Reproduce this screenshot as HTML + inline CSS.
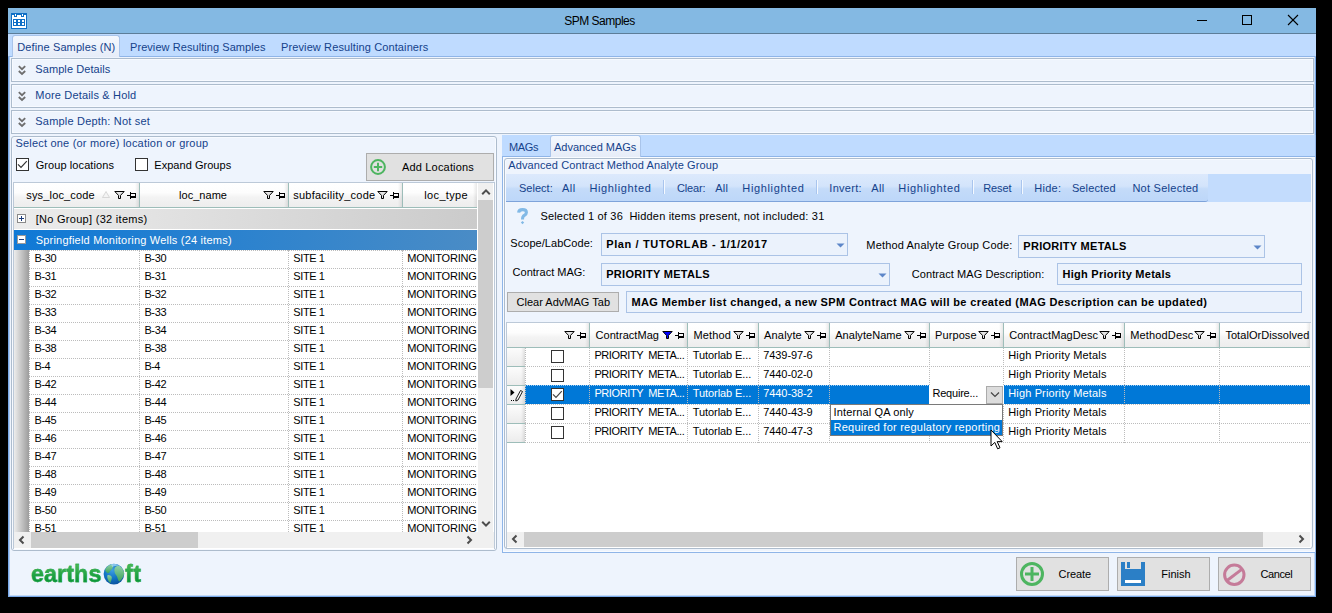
<!DOCTYPE html><html><head><meta charset='utf-8'><title>SPM Samples</title><style>
html,body{margin:0;padding:0;background:#000;}
body{width:1332px;height:613px;overflow:hidden;position:relative;font-family:"Liberation Sans",sans-serif;font-size:11px;color:#000;}
.a{position:absolute;box-sizing:border-box;}
.t{position:absolute;white-space:pre;line-height:14px;height:14px;font-size:11px;}
.n{color:#15428b;}
.b{font-weight:bold;}
.w{color:#fff;}
.ti{font-size:12px;}
.lg{font-size:23.3px;font-weight:bold;line-height:30px;height:30px;background:linear-gradient(#43b753 22%,#079436 78%);-webkit-background-clip:text;background-clip:text;color:transparent;-webkit-text-stroke:0.35px #25a64a;}
.hdr{background:linear-gradient(90deg,rgba(0,0,0,0) 0,rgba(0,0,0,0) calc(100% - 4px),rgba(0,0,0,0.09) 100%),linear-gradient(#ffffff 0%,#fdfdfd 40%,#f3f3f3 60%,#ededed 100%);border-right:1px solid #9dbdb9;border-bottom:1px solid #9dbdb9;}
.btn{background:#e1e1e1;border:1px solid #adadad;}
.inp{background:#ebf2fc;border:1px solid #abc3e6;}
.dotb{border-bottom:1px dotted #bcbcbc;}
.dotr{border-right:1px dotted #bcbcbc;}
.cb{background:#fff;border:1px solid #333;width:13px;height:13px;}
</style></head><body>
<div class='a' style='left:8px;top:8px;width:1308px;height:589px;background:#eef4fd;'></div>
<div class='a' style='left:8px;top:34px;width:1308px;height:563px;border:1px solid #7aa9e8;border-top:none;box-shadow:inset 1px 0 0 #aecbf3,inset -1px 0 0 #c4daf6,inset 0 -1px 0 #c4daf6;'></div>
<div class='a' style='left:8px;top:8px;width:1308px;height:25px;background:#84b9e3;'></div>
<div class='a' style='left:8px;top:33px;width:1308px;height:1px;background:#5c7d99;'></div>
<span class='t ti' style='left:564.2px;top:13.5px;letter-spacing:-0.494px;'>SPM Samples</span>
<svg class='a' style='left:11px;top:13px' width='16' height='16' viewBox='0 0 16 16' shape-rendering='crispEdges'>
<rect x='0' y='0' width='16' height='16' fill='#0f6fc6'/>
<rect x='1' y='2' width='14' height='13' fill='#fff'/>
<rect x='3' y='0' width='3' height='4' fill='#0f6fc6'/><rect x='10' y='0' width='3' height='4' fill='#0f6fc6'/>
<rect x='4' y='1' width='1' height='2' fill='#fff'/><rect x='11' y='1' width='1' height='2' fill='#fff'/>
<rect x='2' y='6' width='12' height='7' fill='#0f6fc6'/>
<g fill='#fff'><rect x='3' y='7' width='2' height='2'/><rect x='7' y='7' width='2' height='2'/><rect x='11' y='7' width='2' height='2'/>
<rect x='3' y='10' width='2' height='2'/><rect x='7' y='10' width='2' height='2'/><rect x='11' y='10' width='2' height='2'/></g>
</svg>
<svg class='a' style='left:1190px;top:8px' width='126' height='25' viewBox='0 0 126 25'>
<g stroke='#000' stroke-width='1' fill='none' shape-rendering='crispEdges'>
<line x1='7' y1='12.5' x2='17' y2='12.5'/>
<rect x='52.5' y='7.5' width='9' height='9'/>
</g>
<g stroke='#000' stroke-width='1.1' fill='none'><line x1='98' y1='7' x2='108' y2='17'/><line x1='108' y1='7' x2='98' y2='17'/></g>
</svg>
<div class='a' style='left:8px;top:34px;width:1308px;height:23px;background:#bfdbff;border-bottom:1px solid #8fb5e8;'></div>
<div class='a' style='left:12px;top:35px;width:108px;height:22px;background:linear-gradient(#f4f8fe,#e6ecf8);border:1px solid #a9c4ea;border-bottom:none;border-radius:3px 3px 0 0;'></div>
<span class='t n' style='left:17.3px;top:40.0px;letter-spacing:0.112px;'>Define Samples (N)</span>
<span class='t n' style='left:130.0px;top:40.0px;letter-spacing:0.064px;'>Preview Resulting Samples</span>
<span class='t n' style='left:281.0px;top:40.0px;letter-spacing:0.114px;'>Preview Resulting Containers</span>
<div class='a' style='left:11px;top:58px;width:1303px;height:24px;background:#eef4fd;border:1px solid #adbccd;box-shadow:inset 0 0 0 1px #f7faff;'></div>
<svg class='a' style='left:18px;top:65px' width='8' height='11' viewBox='0 0 8 11'><g fill='none' stroke='#6e6e6e' stroke-width='1.8'><path d='M0.8 1.2 L4 4.2 L7.2 1.2'/><path d='M0.8 6 L4 9 L7.2 6'/></g></svg>
<span class='t n' style='left:35.3px;top:62.3px;letter-spacing:0.080px;'>Sample Details</span>
<div class='a' style='left:11px;top:84px;width:1303px;height:24px;background:#eef4fd;border:1px solid #adbccd;box-shadow:inset 0 0 0 1px #f7faff;'></div>
<svg class='a' style='left:18px;top:91px' width='8' height='11' viewBox='0 0 8 11'><g fill='none' stroke='#6e6e6e' stroke-width='1.8'><path d='M0.8 1.2 L4 4.2 L7.2 1.2'/><path d='M0.8 6 L4 9 L7.2 6'/></g></svg>
<span class='t n' style='left:35.3px;top:88.3px;letter-spacing:0.172px;'>More Details &amp; Hold</span>
<div class='a' style='left:11px;top:110px;width:1303px;height:24px;background:#eef4fd;border:1px solid #adbccd;box-shadow:inset 0 0 0 1px #f7faff;'></div>
<svg class='a' style='left:18px;top:117px' width='8' height='11' viewBox='0 0 8 11'><g fill='none' stroke='#6e6e6e' stroke-width='1.8'><path d='M0.8 1.2 L4 4.2 L7.2 1.2'/><path d='M0.8 6 L4 9 L7.2 6'/></g></svg>
<span class='t n' style='left:35.3px;top:114.3px;letter-spacing:0.192px;'>Sample Depth: Not set</span>
<div class='a' style='left:11px;top:136px;width:486px;height:415px;background:#eef4fd;border:1px solid #adbccd;border-radius:3px;box-shadow:inset 0 0 0 1px #f7faff;'></div>
<span class='t n' style='left:15.4px;top:136.0px;letter-spacing:0.201px;'>Select one (or more) location or group</span>
<div class='a cb' style='left:16px;top:158px;'></div>
<svg class='a' style='left:16px;top:158px' width='13' height='13' viewBox='0 0 13 13'><path d='M2 6.3 L5 9.3 L10.8 3.2' fill='none' stroke='#333' stroke-width='1.2'/></svg>
<span class='t ' style='left:35.7px;top:158.0px;letter-spacing:0.084px;'>Group locations</span>
<div class='a cb' style='left:135px;top:158px;'></div>
<span class='t ' style='left:154.3px;top:158.0px;letter-spacing:0.036px;'>Expand Groups</span>
<div class='a btn' style='left:366px;top:153px;width:128px;height:28px;'></div>
<svg class='a' style='left:370px;top:159px' width='16' height='16' viewBox='0 0 16 16'><circle cx='8' cy='8' r='6.9' fill='none' stroke='#4db560' stroke-width='2'/><path d='M8 3.8 V12.2 M3.8 8 H12.2' stroke='#4db560' stroke-width='2'/></svg>
<span class='t ' style='left:402.0px;top:160.0px;letter-spacing:0.175px;'>Add Locations</span>
<div class='a' style='left:13px;top:182px;width:482px;height:367px;background:#fff;border:1px solid #bcc9d8;border-bottom:none;'></div>
<div class='a hdr' style='left:14px;top:183px;width:126px;height:25px;'></div>
<div class='a hdr' style='left:140px;top:183px;width:149px;height:25px;'></div>
<div class='a hdr' style='left:289px;top:183px;width:114px;height:25px;'></div>
<div class='a hdr' style='left:403px;top:183px;width:75px;height:25px;'></div>
<span class='t ' style='left:26.3px;top:187.5px;letter-spacing:0.154px;'>sys_loc_code</span>
<svg class='a' style='left:102px;top:191px' width='8' height='7' viewBox='0 0 8 7'><path d='M0.5 6.5 L4 0.5 L7.5 6.5 Z' fill='#f4f4f4' stroke='#cfcfcf' stroke-width='0.8'/></svg>
<svg class='a' style='left:114px;top:191px' width='11' height='8' viewBox='0 0 11 8'><path d='M0.8 0.5 H10.2 L6.5 4.4 V7.5 H4.5 V4.4 Z' fill='#e4e4e4' stroke='#000' stroke-width='1'/></svg>
<svg class='a' style='left:127px;top:192px' width='9' height='7' viewBox='0 0 9 7' shape-rendering='crispEdges'><path d='M0 3.5 H3.5 M3.5 0 V7 M4 1.5 H8.5 V5.5 H4' fill='none' stroke='#000' stroke-width='1'/><path d='M4 4.5 H8.5' stroke='#000' stroke-width='1'/></svg>
<span class='t ' style='left:179.0px;top:187.5px;letter-spacing:0.037px;'>loc_name</span>
<svg class='a' style='left:263px;top:191px' width='11' height='8' viewBox='0 0 11 8'><path d='M0.8 0.5 H10.2 L6.5 4.4 V7.5 H4.5 V4.4 Z' fill='#e4e4e4' stroke='#000' stroke-width='1'/></svg>
<svg class='a' style='left:276px;top:192px' width='9' height='7' viewBox='0 0 9 7' shape-rendering='crispEdges'><path d='M0 3.5 H3.5 M3.5 0 V7 M4 1.5 H8.5 V5.5 H4' fill='none' stroke='#000' stroke-width='1'/><path d='M4 4.5 H8.5' stroke='#000' stroke-width='1'/></svg>
<span class='t ' style='left:293.2px;top:187.5px;letter-spacing:0.251px;'>subfacility_code</span>
<svg class='a' style='left:377px;top:191px' width='11' height='8' viewBox='0 0 11 8'><path d='M0.8 0.5 H10.2 L6.5 4.4 V7.5 H4.5 V4.4 Z' fill='#e4e4e4' stroke='#000' stroke-width='1'/></svg>
<svg class='a' style='left:390px;top:192px' width='9' height='7' viewBox='0 0 9 7' shape-rendering='crispEdges'><path d='M0 3.5 H3.5 M3.5 0 V7 M4 1.5 H8.5 V5.5 H4' fill='none' stroke='#000' stroke-width='1'/><path d='M4 4.5 H8.5' stroke='#000' stroke-width='1'/></svg>
<span class='t ' style='left:424.3px;top:187.5px;letter-spacing:0.339px;'>loc_type</span>
<div class='a' style='left:14px;top:209px;width:463px;height:20px;background:linear-gradient(90deg,#ececec,#cbcbcb);'></div>
<svg class='a' style='left:17px;top:214px' width='9' height='9' viewBox='0 0 9 9' shape-rendering='crispEdges'><rect x='0.5' y='0.5' width='8' height='8' fill='#fff' stroke='#8a8a8a'/><path d='M2 4.5 H7 M4.5 2 V7' stroke='#1a3a7a' stroke-width='1'/></svg>
<span class='t ' style='left:35.7px;top:212.0px;letter-spacing:0.287px;'>[No Group] (32 items)</span>
<div class='a' style='left:14px;top:230px;width:463px;height:20px;background:linear-gradient(90deg,#0f79d6,#4a8cc6);'></div>
<svg class='a' style='left:17px;top:235px' width='9' height='9' viewBox='0 0 9 9' shape-rendering='crispEdges'><rect x='0.5' y='0.5' width='8' height='8' fill='#fff' stroke='#9a9a9a'/><path d='M2 4.5 H7' stroke='#1a3a7a' stroke-width='1'/></svg>
<span class='t w' style='left:35.7px;top:233.0px;letter-spacing:0.205px;'>Springfield Monitoring Wells (24 items)</span>
<div class='a' style='left:14px;top:250px;width:15px;height:282px;background:linear-gradient(90deg,#ededed,#9c9c9c);'></div>
<div class='a' style='left:29px;top:250px;width:449px;height:282px;overflow:hidden;'>
<div class='a' style='left:0;top:0;width:449px;height:1px;border-top:1px dotted #bcbcbc;'></div>
<div class='a' style='left:0px;top:0;width:1px;height:282px;border-left:1px dotted #bcbcbc;'></div>
<div class='a' style='left:110px;top:0;width:1px;height:282px;border-left:1px dotted #bcbcbc;'></div>
<div class='a' style='left:259px;top:0;width:1px;height:282px;border-left:1px dotted #bcbcbc;'></div>
<div class='a' style='left:373px;top:0;width:1px;height:282px;border-left:1px dotted #bcbcbc;'></div>
<div class='a' style='left:0;top:18px;width:449px;height:1px;border-top:1px dotted #bcbcbc;'></div>
<div class='a' style='left:0;top:36px;width:449px;height:1px;border-top:1px dotted #bcbcbc;'></div>
<div class='a' style='left:0;top:54px;width:449px;height:1px;border-top:1px dotted #bcbcbc;'></div>
<div class='a' style='left:0;top:72px;width:449px;height:1px;border-top:1px dotted #bcbcbc;'></div>
<div class='a' style='left:0;top:90px;width:449px;height:1px;border-top:1px dotted #bcbcbc;'></div>
<div class='a' style='left:0;top:108px;width:449px;height:1px;border-top:1px dotted #bcbcbc;'></div>
<div class='a' style='left:0;top:126px;width:449px;height:1px;border-top:1px dotted #bcbcbc;'></div>
<div class='a' style='left:0;top:144px;width:449px;height:1px;border-top:1px dotted #bcbcbc;'></div>
<div class='a' style='left:0;top:162px;width:449px;height:1px;border-top:1px dotted #bcbcbc;'></div>
<div class='a' style='left:0;top:180px;width:449px;height:1px;border-top:1px dotted #bcbcbc;'></div>
<div class='a' style='left:0;top:198px;width:449px;height:1px;border-top:1px dotted #bcbcbc;'></div>
<div class='a' style='left:0;top:216px;width:449px;height:1px;border-top:1px dotted #bcbcbc;'></div>
<div class='a' style='left:0;top:234px;width:449px;height:1px;border-top:1px dotted #bcbcbc;'></div>
<div class='a' style='left:0;top:252px;width:449px;height:1px;border-top:1px dotted #bcbcbc;'></div>
<div class='a' style='left:0;top:270px;width:449px;height:1px;border-top:1px dotted #bcbcbc;'></div>
<div class='a' style='left:0;top:288px;width:449px;height:1px;border-top:1px dotted #bcbcbc;'></div>
</div>
<div class='a' style='left:14px;top:250px;width:463px;height:282px;overflow:hidden;'>
<span class='t ' style='left:20.5px;top:1.0px;letter-spacing:-0.363px;'>B-30</span>
<span class='t ' style='left:130.4px;top:1.0px;letter-spacing:-0.362px;'>B-30</span>
<span class='t ' style='left:279.3px;top:1.0px;letter-spacing:-0.404px;'>SITE 1</span>
<span class='t ' style='left:393.3px;top:1.0px;letter-spacing:-0.200px;'>MONITORING</span>
<span class='t ' style='left:20.5px;top:19.0px;letter-spacing:-0.363px;'>B-31</span>
<span class='t ' style='left:130.4px;top:19.0px;letter-spacing:-0.362px;'>B-31</span>
<span class='t ' style='left:279.3px;top:19.0px;letter-spacing:-0.404px;'>SITE 1</span>
<span class='t ' style='left:393.3px;top:19.0px;letter-spacing:-0.200px;'>MONITORING</span>
<span class='t ' style='left:20.5px;top:37.0px;letter-spacing:-0.363px;'>B-32</span>
<span class='t ' style='left:130.4px;top:37.0px;letter-spacing:-0.362px;'>B-32</span>
<span class='t ' style='left:279.3px;top:37.0px;letter-spacing:-0.404px;'>SITE 1</span>
<span class='t ' style='left:393.3px;top:37.0px;letter-spacing:-0.200px;'>MONITORING</span>
<span class='t ' style='left:20.5px;top:55.0px;letter-spacing:-0.363px;'>B-33</span>
<span class='t ' style='left:130.4px;top:55.0px;letter-spacing:-0.362px;'>B-33</span>
<span class='t ' style='left:279.3px;top:55.0px;letter-spacing:-0.404px;'>SITE 1</span>
<span class='t ' style='left:393.3px;top:55.0px;letter-spacing:-0.200px;'>MONITORING</span>
<span class='t ' style='left:20.5px;top:73.0px;letter-spacing:-0.363px;'>B-34</span>
<span class='t ' style='left:130.4px;top:73.0px;letter-spacing:-0.362px;'>B-34</span>
<span class='t ' style='left:279.3px;top:73.0px;letter-spacing:-0.404px;'>SITE 1</span>
<span class='t ' style='left:393.3px;top:73.0px;letter-spacing:-0.200px;'>MONITORING</span>
<span class='t ' style='left:20.5px;top:91.0px;letter-spacing:-0.363px;'>B-38</span>
<span class='t ' style='left:130.4px;top:91.0px;letter-spacing:-0.362px;'>B-38</span>
<span class='t ' style='left:279.3px;top:91.0px;letter-spacing:-0.404px;'>SITE 1</span>
<span class='t ' style='left:393.3px;top:91.0px;letter-spacing:-0.200px;'>MONITORING</span>
<span class='t ' style='left:20.5px;top:109.0px;letter-spacing:-0.542px;'>B-4</span>
<span class='t ' style='left:130.4px;top:109.0px;letter-spacing:-0.542px;'>B-4</span>
<span class='t ' style='left:279.3px;top:109.0px;letter-spacing:-0.404px;'>SITE 1</span>
<span class='t ' style='left:393.3px;top:109.0px;letter-spacing:-0.200px;'>MONITORING</span>
<span class='t ' style='left:20.5px;top:127.0px;letter-spacing:-0.363px;'>B-42</span>
<span class='t ' style='left:130.4px;top:127.0px;letter-spacing:-0.362px;'>B-42</span>
<span class='t ' style='left:279.3px;top:127.0px;letter-spacing:-0.404px;'>SITE 1</span>
<span class='t ' style='left:393.3px;top:127.0px;letter-spacing:-0.200px;'>MONITORING</span>
<span class='t ' style='left:20.5px;top:145.0px;letter-spacing:-0.363px;'>B-44</span>
<span class='t ' style='left:130.4px;top:145.0px;letter-spacing:-0.362px;'>B-44</span>
<span class='t ' style='left:279.3px;top:145.0px;letter-spacing:-0.404px;'>SITE 1</span>
<span class='t ' style='left:393.3px;top:145.0px;letter-spacing:-0.200px;'>MONITORING</span>
<span class='t ' style='left:20.5px;top:163.0px;letter-spacing:-0.363px;'>B-45</span>
<span class='t ' style='left:130.4px;top:163.0px;letter-spacing:-0.362px;'>B-45</span>
<span class='t ' style='left:279.3px;top:163.0px;letter-spacing:-0.404px;'>SITE 1</span>
<span class='t ' style='left:393.3px;top:163.0px;letter-spacing:-0.200px;'>MONITORING</span>
<span class='t ' style='left:20.5px;top:181.0px;letter-spacing:-0.363px;'>B-46</span>
<span class='t ' style='left:130.4px;top:181.0px;letter-spacing:-0.362px;'>B-46</span>
<span class='t ' style='left:279.3px;top:181.0px;letter-spacing:-0.404px;'>SITE 1</span>
<span class='t ' style='left:393.3px;top:181.0px;letter-spacing:-0.200px;'>MONITORING</span>
<span class='t ' style='left:20.5px;top:199.0px;letter-spacing:-0.363px;'>B-47</span>
<span class='t ' style='left:130.4px;top:199.0px;letter-spacing:-0.362px;'>B-47</span>
<span class='t ' style='left:279.3px;top:199.0px;letter-spacing:-0.404px;'>SITE 1</span>
<span class='t ' style='left:393.3px;top:199.0px;letter-spacing:-0.200px;'>MONITORING</span>
<span class='t ' style='left:20.5px;top:217.0px;letter-spacing:-0.363px;'>B-48</span>
<span class='t ' style='left:130.4px;top:217.0px;letter-spacing:-0.362px;'>B-48</span>
<span class='t ' style='left:279.3px;top:217.0px;letter-spacing:-0.404px;'>SITE 1</span>
<span class='t ' style='left:393.3px;top:217.0px;letter-spacing:-0.200px;'>MONITORING</span>
<span class='t ' style='left:20.5px;top:235.0px;letter-spacing:-0.363px;'>B-49</span>
<span class='t ' style='left:130.4px;top:235.0px;letter-spacing:-0.362px;'>B-49</span>
<span class='t ' style='left:279.3px;top:235.0px;letter-spacing:-0.404px;'>SITE 1</span>
<span class='t ' style='left:393.3px;top:235.0px;letter-spacing:-0.200px;'>MONITORING</span>
<span class='t ' style='left:20.5px;top:253.0px;letter-spacing:-0.363px;'>B-50</span>
<span class='t ' style='left:130.4px;top:253.0px;letter-spacing:-0.362px;'>B-50</span>
<span class='t ' style='left:279.3px;top:253.0px;letter-spacing:-0.404px;'>SITE 1</span>
<span class='t ' style='left:393.3px;top:253.0px;letter-spacing:-0.200px;'>MONITORING</span>
<span class='t ' style='left:20.5px;top:271.0px;letter-spacing:-0.363px;'>B-51</span>
<span class='t ' style='left:130.4px;top:271.0px;letter-spacing:-0.362px;'>B-51</span>
<span class='t ' style='left:279.3px;top:271.0px;letter-spacing:-0.404px;'>SITE 1</span>
<span class='t ' style='left:393.3px;top:271.0px;letter-spacing:-0.200px;'>MONITORING</span>
</div>
<div class='a' style='left:477px;top:183px;width:1px;height:349px;background:#fff;'></div>
<div class='a' style='left:478px;top:183px;width:15px;height:349px;background:#f0f0f0;'></div>
<div class='a' style='left:478px;top:200px;width:15px;height:188px;background:#cdcdcd;'></div>
<svg class='a' style='left:481px;top:187px' width='10' height='10' viewBox='0 0 10 10'><path d='M1.2 7.2 L5 3.4 L8.8 7.2' fill='none' stroke='#4d4d4d' stroke-width='2'/></svg>
<svg class='a' style='left:481px;top:519px' width='10' height='10' viewBox='0 0 10 10'><path d='M1.2 2.8 L5 6.6 L8.8 2.8' fill='none' stroke='#4d4d4d' stroke-width='2'/></svg>
<div class='a' style='left:14px;top:532px;width:480px;height:16px;background:#f0f0f0;'></div>
<div class='a' style='left:31px;top:532px;width:167px;height:16px;background:#cdcdcd;'></div>
<svg class='a' style='left:17px;top:535px' width='10' height='10' viewBox='0 0 10 10'><path d='M6.5 1.5 L3 5 L6.5 8.5' fill='none' stroke='#4d4d4d' stroke-width='2'/></svg>
<svg class='a' style='left:464px;top:535px' width='10' height='10' viewBox='0 0 10 10'><path d='M3.5 1.5 L7 5 L3.5 8.5' fill='none' stroke='#4d4d4d' stroke-width='2'/></svg>
<div class='a' style='left:502px;top:135px;width:814px;height:22px;background:#bfdbff;border-right:1px solid #8fb5e8;'></div>
<div class='a' style='left:502px;top:156px;width:814px;height:397px;background:#eef4fd;border:1px solid #8fb5e8;box-shadow:inset 0 0 0 1px #f8fbff;'></div>
<div class='a' style='left:550px;top:135px;width:91px;height:22px;background:linear-gradient(#f4f8fe,#e6ecf8);border:1px solid #a9c4ea;border-bottom:none;border-radius:3px 3px 0 0;'></div>
<span class='t n' style='left:509.0px;top:140.2px;letter-spacing:-0.391px;'>MAGs</span>
<span class='t n' style='left:554.0px;top:140.2px;letter-spacing:-0.019px;'>Advanced MAGs</span>
<div class='a' style='left:504px;top:158px;width:809px;height:391px;background:#eef4fd;border:1px solid #adbccd;border-radius:3px;box-shadow:inset 0 0 0 1px #f7faff;'></div>
<span class='t n' style='left:508.3px;top:158.2px;letter-spacing:0.101px;'>Advanced Contract Method Analyte Group</span>
<div class='a' style='left:506px;top:174px;width:805px;height:28px;background:#c3dcfd;'></div>
<div class='a' style='left:506px;top:174px;width:702px;height:28px;background:linear-gradient(#dce9fc 0%,#d3e4fb 45%,#c4dbf9 55%,#bdd7f9 100%);border-bottom:1px solid #7ea3da;border-radius:0 0 3px 0;'></div>
<span class='t n' style='left:518.9px;top:180.8px;letter-spacing:0.037px;'>Select:</span>
<span class='t n' style='left:562.0px;top:180.8px;letter-spacing:0.489px;'>All</span>
<span class='t n' style='left:589.4px;top:180.8px;letter-spacing:0.650px;'>Highlighted</span>
<span class='t n' style='left:677.0px;top:180.8px;letter-spacing:-0.141px;'>Clear:</span>
<span class='t n' style='left:715.2px;top:180.8px;letter-spacing:0.322px;'>All</span>
<span class='t n' style='left:742.3px;top:180.8px;letter-spacing:0.650px;'>Highlighted</span>
<span class='t n' style='left:829.3px;top:180.8px;letter-spacing:0.275px;'>Invert:</span>
<span class='t n' style='left:871.3px;top:180.8px;letter-spacing:0.322px;'>All</span>
<span class='t n' style='left:898.3px;top:180.8px;letter-spacing:0.650px;'>Highlighted</span>
<span class='t n' style='left:983.3px;top:180.8px;letter-spacing:-0.150px;'>Reset</span>
<span class='t n' style='left:1034.3px;top:180.8px;letter-spacing:0.263px;'>Hide:</span>
<span class='t n' style='left:1071.9px;top:180.8px;letter-spacing:0.136px;'>Selected</span>
<span class='t n' style='left:1132.4px;top:180.8px;letter-spacing:0.260px;'>Not Selected</span>
<div class='a' style='left:663px;top:180px;width:2px;height:14px;border-left:1px solid #a9c5ee;border-right:1px solid #f4f9ff;'></div>
<div class='a' style='left:816px;top:180px;width:2px;height:14px;border-left:1px solid #a9c5ee;border-right:1px solid #f4f9ff;'></div>
<div class='a' style='left:972px;top:180px;width:2px;height:14px;border-left:1px solid #a9c5ee;border-right:1px solid #f4f9ff;'></div>
<div class='a' style='left:1021px;top:180px;width:2px;height:14px;border-left:1px solid #a9c5ee;border-right:1px solid #f4f9ff;'></div>
<svg class='a' style='left:516px;top:207px' width='13' height='18' viewBox='0 0 13 18'><path d='M2.6 5.6 C2.8 3.2 4.6 2.6 6.6 2.6 C9 2.6 10.4 3.8 10.4 5.4 C10.4 7.4 8.6 8 7.4 9.2 C6.6 10 6.5 10.8 6.5 12.6' fill='none' stroke='#82b9e6' stroke-width='3.1'/><path d='M6.5 13.9 L8.2 15.6 L6.5 17.3 L4.8 15.6 Z' fill='#82b9e6'/></svg>
<span class='t ' style='left:540.4px;top:209.1px;letter-spacing:0.192px;'>Selected 1 of 36  Hidden items present, not included: 31</span>
<span class='t ' style='left:510.3px;top:236.2px;letter-spacing:0.046px;'>Scope/LabCode:</span>
<div class='a inp' style='left:601px;top:233px;width:247px;height:23px;'></div>
<span class='t b' style='left:606.2px;top:237.0px;letter-spacing:0.627px;'>Plan / TUTORLAB - 1/1/2017</span>
<svg class='a' style='left:836px;top:243px' width='9' height='5' viewBox='0 0 9 5'><path d='M0.5 0.5 H8.5 L4.5 4.5 Z' fill='#5d86c8'/></svg>
<span class='t ' style='left:866.3px;top:237.5px;letter-spacing:0.166px;'>Method Analyte Group Code:</span>
<div class='a inp' style='left:1018px;top:235px;width:247px;height:23px;'></div>
<span class='t b' style='left:1023.3px;top:239.0px;letter-spacing:0.279px;'>PRIORITY METALS</span>
<svg class='a' style='left:1253px;top:245px' width='9' height='5' viewBox='0 0 9 5'><path d='M0.5 0.5 H8.5 L4.5 4.5 Z' fill='#5d86c8'/></svg>
<span class='t ' style='left:512.6px;top:265.4px;letter-spacing:0.004px;'>Contract MAG:</span>
<div class='a inp' style='left:601px;top:263px;width:289px;height:23px;'></div>
<span class='t b' style='left:606.2px;top:266.5px;letter-spacing:0.305px;'>PRIORITY METALS</span>
<svg class='a' style='left:878px;top:273px' width='9' height='5' viewBox='0 0 9 5'><path d='M0.5 0.5 H8.5 L4.5 4.5 Z' fill='#5d86c8'/></svg>
<span class='t ' style='left:911.8px;top:267.3px;letter-spacing:0.067px;'>Contract MAG Description:</span>
<div class='a inp' style='left:1057px;top:263px;width:245px;height:22px;'></div>
<span class='t b' style='left:1062.5px;top:267.3px;letter-spacing:0.270px;'>High Priority Metals</span>
<div class='a btn' style='left:507px;top:292px;width:112px;height:20px;'></div>
<span class='t ' style='left:516.5px;top:295.0px;letter-spacing:0.016px;'>Clear AdvMAG Tab</span>
<div class='a inp' style='left:626px;top:291px;width:676px;height:22px;'></div>
<span class='t b' style='left:631.5px;top:295.0px;letter-spacing:0.363px;'>MAG Member list changed, a new SPM Contract MAG will be created (MAG Description can be updated)</span>
<div class='a' style='left:506px;top:322px;width:805px;height:226px;background:#fff;border:1px solid #bcc9d8;border-bottom:none;border-right:none;'></div>
<div class='a hdr' style='left:507px;top:323px;width:83px;height:25px;'></div>
<div class='a hdr' style='left:590px;top:323px;width:98px;height:25px;'></div>
<div class='a hdr' style='left:688px;top:323px;width:71px;height:25px;'></div>
<div class='a hdr' style='left:759px;top:323px;width:71px;height:25px;'></div>
<div class='a hdr' style='left:830px;top:323px;width:100px;height:25px;'></div>
<div class='a hdr' style='left:930px;top:323px;width:74px;height:25px;'></div>
<div class='a hdr' style='left:1004px;top:323px;width:121px;height:25px;'></div>
<div class='a hdr' style='left:1125px;top:323px;width:95px;height:25px;'></div>
<div class='a hdr' style='left:1220px;top:323px;width:91px;height:25px;'></div>
<div class='a' style='left:1310px;top:323px;width:1px;height:25px;background:#f6f9fe'></div>
<svg class='a' style='left:564px;top:331px' width='11' height='8' viewBox='0 0 11 8'><path d='M0.8 0.5 H10.2 L6.5 4.4 V7.5 H4.5 V4.4 Z' fill='#e4e4e4' stroke='#000' stroke-width='1'/></svg>
<svg class='a' style='left:577px;top:332px' width='9' height='7' viewBox='0 0 9 7' shape-rendering='crispEdges'><path d='M0 3.5 H3.5 M3.5 0 V7 M4 1.5 H8.5 V5.5 H4' fill='none' stroke='#000' stroke-width='1'/><path d='M4 4.5 H8.5' stroke='#000' stroke-width='1'/></svg>
<span class='t ' style='left:595.5px;top:327.5px;letter-spacing:0.047px;'>ContractMag</span>
<svg class='a' style='left:662px;top:331px' width='11' height='8' viewBox='0 0 11 8'><path d='M0.8 0.5 H10.2 L6.5 4.4 V7.5 H4.5 V4.4 Z' fill='#0000ff' stroke='#000' stroke-width='1'/></svg>
<svg class='a' style='left:675px;top:332px' width='9' height='7' viewBox='0 0 9 7' shape-rendering='crispEdges'><path d='M0 3.5 H3.5 M3.5 0 V7 M4 1.5 H8.5 V5.5 H4' fill='none' stroke='#000' stroke-width='1'/><path d='M4 4.5 H8.5' stroke='#000' stroke-width='1'/></svg>
<span class='t ' style='left:693.4px;top:327.5px;letter-spacing:0.149px;'>Method</span>
<svg class='a' style='left:733px;top:331px' width='11' height='8' viewBox='0 0 11 8'><path d='M0.8 0.5 H10.2 L6.5 4.4 V7.5 H4.5 V4.4 Z' fill='#e4e4e4' stroke='#000' stroke-width='1'/></svg>
<svg class='a' style='left:746px;top:332px' width='9' height='7' viewBox='0 0 9 7' shape-rendering='crispEdges'><path d='M0 3.5 H3.5 M3.5 0 V7 M4 1.5 H8.5 V5.5 H4' fill='none' stroke='#000' stroke-width='1'/><path d='M4 4.5 H8.5' stroke='#000' stroke-width='1'/></svg>
<span class='t ' style='left:764.1px;top:327.5px;letter-spacing:0.157px;'>Analyte</span>
<svg class='a' style='left:804px;top:331px' width='11' height='8' viewBox='0 0 11 8'><path d='M0.8 0.5 H10.2 L6.5 4.4 V7.5 H4.5 V4.4 Z' fill='#e4e4e4' stroke='#000' stroke-width='1'/></svg>
<svg class='a' style='left:817px;top:332px' width='9' height='7' viewBox='0 0 9 7' shape-rendering='crispEdges'><path d='M0 3.5 H3.5 M3.5 0 V7 M4 1.5 H8.5 V5.5 H4' fill='none' stroke='#000' stroke-width='1'/><path d='M4 4.5 H8.5' stroke='#000' stroke-width='1'/></svg>
<span class='t ' style='left:835.2px;top:327.5px;letter-spacing:0.041px;'>AnalyteName</span>
<svg class='a' style='left:904px;top:331px' width='11' height='8' viewBox='0 0 11 8'><path d='M0.8 0.5 H10.2 L6.5 4.4 V7.5 H4.5 V4.4 Z' fill='#e4e4e4' stroke='#000' stroke-width='1'/></svg>
<svg class='a' style='left:917px;top:332px' width='9' height='7' viewBox='0 0 9 7' shape-rendering='crispEdges'><path d='M0 3.5 H3.5 M3.5 0 V7 M4 1.5 H8.5 V5.5 H4' fill='none' stroke='#000' stroke-width='1'/><path d='M4 4.5 H8.5' stroke='#000' stroke-width='1'/></svg>
<span class='t ' style='left:935.0px;top:327.5px;letter-spacing:0.102px;'>Purpose</span>
<svg class='a' style='left:978px;top:331px' width='11' height='8' viewBox='0 0 11 8'><path d='M0.8 0.5 H10.2 L6.5 4.4 V7.5 H4.5 V4.4 Z' fill='#e4e4e4' stroke='#000' stroke-width='1'/></svg>
<svg class='a' style='left:991px;top:332px' width='9' height='7' viewBox='0 0 9 7' shape-rendering='crispEdges'><path d='M0 3.5 H3.5 M3.5 0 V7 M4 1.5 H8.5 V5.5 H4' fill='none' stroke='#000' stroke-width='1'/><path d='M4 4.5 H8.5' stroke='#000' stroke-width='1'/></svg>
<span class='t ' style='left:1009.2px;top:327.5px;letter-spacing:0.057px;'>ContractMagDesc</span>
<svg class='a' style='left:1099px;top:331px' width='11' height='8' viewBox='0 0 11 8'><path d='M0.8 0.5 H10.2 L6.5 4.4 V7.5 H4.5 V4.4 Z' fill='#e4e4e4' stroke='#000' stroke-width='1'/></svg>
<svg class='a' style='left:1112px;top:332px' width='9' height='7' viewBox='0 0 9 7' shape-rendering='crispEdges'><path d='M0 3.5 H3.5 M3.5 0 V7 M4 1.5 H8.5 V5.5 H4' fill='none' stroke='#000' stroke-width='1'/><path d='M4 4.5 H8.5' stroke='#000' stroke-width='1'/></svg>
<span class='t ' style='left:1130.3px;top:327.5px;letter-spacing:0.143px;'>MethodDesc</span>
<svg class='a' style='left:1194px;top:331px' width='11' height='8' viewBox='0 0 11 8'><path d='M0.8 0.5 H10.2 L6.5 4.4 V7.5 H4.5 V4.4 Z' fill='#e4e4e4' stroke='#000' stroke-width='1'/></svg>
<svg class='a' style='left:1207px;top:332px' width='9' height='7' viewBox='0 0 9 7' shape-rendering='crispEdges'><path d='M0 3.5 H3.5 M3.5 0 V7 M4 1.5 H8.5 V5.5 H4' fill='none' stroke='#000' stroke-width='1'/><path d='M4 4.5 H8.5' stroke='#000' stroke-width='1'/></svg>
<div class='a' style='left:1219px;top:323px;width:91px;height:25px;overflow:hidden'>
<span class='t ' style='left:6.4px;top:4.5px;letter-spacing:0.054px;'>TotalOrDissolved</span>
</div>
<div class='a' style='left:507px;top:348px;width:18px;height:19px;background:linear-gradient(90deg,rgba(0,0,0,0) 0,rgba(0,0,0,0) 14px,rgba(0,0,0,0.10) 18px),linear-gradient(#fcfcfc,#ececec);border-bottom:1px solid #9dbdb9;'></div>
<div class='a' style='left:525px;top:366px;width:785px;height:1px;border-top:1px dotted #bcbcbc;'></div>
<div class='a cb' style='left:551px;top:350px;'></div>
<span class='t ' style='left:594.4px;top:348.0px;letter-spacing:-0.399px;'>PRIORITY  META...</span>
<span class='t ' style='left:692.8px;top:348.0px;letter-spacing:-0.086px;'>Tutorlab E...</span>
<span class='t ' style='left:763.3px;top:348.0px;letter-spacing:-0.095px;'>7439-97-6</span>
<span class='t ' style='left:1008.2px;top:348.0px;letter-spacing:0.152px;'>High Priority Metals</span>
<div class='a' style='left:507px;top:367px;width:18px;height:19px;background:linear-gradient(90deg,rgba(0,0,0,0) 0,rgba(0,0,0,0) 14px,rgba(0,0,0,0.10) 18px),linear-gradient(#fcfcfc,#ececec);border-bottom:1px solid #9dbdb9;'></div>
<div class='a' style='left:525px;top:385px;width:785px;height:1px;border-top:1px dotted #bcbcbc;'></div>
<div class='a cb' style='left:551px;top:369px;'></div>
<span class='t ' style='left:594.4px;top:367.0px;letter-spacing:-0.399px;'>PRIORITY  META...</span>
<span class='t ' style='left:692.8px;top:367.0px;letter-spacing:-0.086px;'>Tutorlab E...</span>
<span class='t ' style='left:763.3px;top:367.0px;letter-spacing:-0.095px;'>7440-02-0</span>
<span class='t ' style='left:1008.2px;top:367.0px;letter-spacing:0.152px;'>High Priority Metals</span>
<div class='a' style='left:507px;top:386px;width:18px;height:19px;background:linear-gradient(90deg,rgba(0,0,0,0) 0,rgba(0,0,0,0) 14px,rgba(0,0,0,0.10) 18px),linear-gradient(#fcfcfc,#ececec);border-bottom:1px solid #9dbdb9;'></div>
<div class='a' style='left:525px;top:385px;width:785px;height:19px;background:#0078d7;'></div>
<div class='a' style='left:525px;top:385px;width:785px;height:1px;border-top:1px dotted #9ccdf5;'></div>
<div class='a' style='left:525px;top:404px;width:785px;height:1px;border-top:1px dotted #bcbcbc;'></div>
<div class='a cb' style='left:551px;top:388px;'></div>
<span class='t w' style='left:594.4px;top:386.0px;letter-spacing:-0.399px;'>PRIORITY  META...</span>
<span class='t w' style='left:692.8px;top:386.0px;letter-spacing:-0.086px;'>Tutorlab E...</span>
<span class='t w' style='left:763.3px;top:386.0px;letter-spacing:-0.095px;'>7440-38-2</span>
<span class='t w' style='left:1008.2px;top:386.0px;letter-spacing:0.152px;'>High Priority Metals</span>
<div class='a' style='left:507px;top:405px;width:18px;height:19px;background:linear-gradient(90deg,rgba(0,0,0,0) 0,rgba(0,0,0,0) 14px,rgba(0,0,0,0.10) 18px),linear-gradient(#fcfcfc,#ececec);border-bottom:1px solid #9dbdb9;'></div>
<div class='a' style='left:525px;top:423px;width:785px;height:1px;border-top:1px dotted #bcbcbc;'></div>
<div class='a cb' style='left:551px;top:407px;'></div>
<span class='t ' style='left:594.4px;top:405.0px;letter-spacing:-0.399px;'>PRIORITY  META...</span>
<span class='t ' style='left:692.8px;top:405.0px;letter-spacing:-0.086px;'>Tutorlab E...</span>
<span class='t ' style='left:763.3px;top:405.0px;letter-spacing:-0.095px;'>7440-43-9</span>
<span class='t ' style='left:1008.2px;top:405.0px;letter-spacing:0.152px;'>High Priority Metals</span>
<div class='a' style='left:507px;top:424px;width:18px;height:19px;background:linear-gradient(90deg,rgba(0,0,0,0) 0,rgba(0,0,0,0) 14px,rgba(0,0,0,0.10) 18px),linear-gradient(#fcfcfc,#ececec);border-bottom:1px solid #9dbdb9;'></div>
<div class='a' style='left:525px;top:442px;width:785px;height:1px;border-top:1px dotted #bcbcbc;'></div>
<div class='a cb' style='left:551px;top:426px;'></div>
<span class='t ' style='left:594.4px;top:424.0px;letter-spacing:-0.399px;'>PRIORITY  META...</span>
<span class='t ' style='left:692.8px;top:424.0px;letter-spacing:-0.086px;'>Tutorlab E...</span>
<span class='t ' style='left:763.3px;top:424.0px;letter-spacing:-0.095px;'>7440-47-3</span>
<span class='t ' style='left:1008.2px;top:424.0px;letter-spacing:0.152px;'>High Priority Metals</span>
<div class='a' style='left:589px;top:348px;width:1px;height:95px;border-left:1px dotted #bcbcbc;'></div>
<div class='a' style='left:687px;top:348px;width:1px;height:95px;border-left:1px dotted #bcbcbc;'></div>
<div class='a' style='left:758px;top:348px;width:1px;height:95px;border-left:1px dotted #bcbcbc;'></div>
<div class='a' style='left:829px;top:348px;width:1px;height:95px;border-left:1px dotted #bcbcbc;'></div>
<div class='a' style='left:929px;top:348px;width:1px;height:95px;border-left:1px dotted #bcbcbc;'></div>
<div class='a' style='left:1003px;top:348px;width:1px;height:95px;border-left:1px dotted #bcbcbc;'></div>
<div class='a' style='left:1124px;top:348px;width:1px;height:95px;border-left:1px dotted #bcbcbc;'></div>
<div class='a' style='left:1219px;top:348px;width:1px;height:95px;border-left:1px dotted #bcbcbc;'></div>
<div class='a' style='left:525px;top:348px;width:1px;height:95px;border-left:1px dotted #bcbcbc;'></div>
<svg class='a' style='left:551px;top:388px' width='13' height='13' viewBox='0 0 13 13'><path d='M2 6.3 L5 9.3 L10.8 3.2' fill='none' stroke='#444' stroke-width='1.2'/></svg>
<svg class='a' style='left:510px;top:388px' width='14' height='14' viewBox='0 0 14 14'><path d='M0.5 1 L4.5 4.5 L0.5 8 Z' fill='#000'/><path d='M6 11 L10.5 2.5 L12.5 3.5 L8 12 L5.8 13 Z' fill='#fff' stroke='#000' stroke-width='0.9'/><path d='M1 12.5 H5' stroke='#000' stroke-width='1' stroke-dasharray='1 1'/></svg>
<div class='a' style='left:929px;top:385px;width:75px;height:19px;background:#fff;'></div>
<span class='t ' style='left:932.5px;top:386.0px;letter-spacing:-0.220px;'>Require...</span>
<div class='a' style='left:986px;top:386px;width:17px;height:18px;background:#dcdcdc;border:1px solid #ababab;'></div>
<svg class='a' style='left:990px;top:391px' width='10' height='7' viewBox='0 0 10 7'><path d='M1 1.5 L5 5.5 L9 1.5' fill='none' stroke='#444' stroke-width='1.2'/></svg>
<div class='a' style='left:830px;top:404px;width:173px;height:32px;background:#fff;border:1px solid #7a7a7a;'></div>
<span class='t ' style='left:833.6px;top:404.8px;letter-spacing:0.132px;'>Internal QA only</span>
<div class='a' style='left:831px;top:420px;width:171px;height:15px;background:#0078d7;'></div>
<span class='t w' style='left:833.6px;top:420.0px;letter-spacing:0.231px;'>Required for regulatory reporting</span>
<svg class='a' style='left:990.4px;top:429px' width='13' height='21' viewBox='0 0 13 21'><path d='M1 1 V17 L4.8 13.4 L7.6 19.8 L10 18.8 L7.2 12.6 H12.2 Z' fill='#fff' stroke='#000' stroke-width='1'/></svg>
<div class='a' style='left:507px;top:532px;width:803px;height:15px;background:#f0f0f0;'></div>
<div class='a' style='left:524px;top:532px;width:739px;height:15px;background:#cdcdcd;'></div>
<svg class='a' style='left:510px;top:534px' width='10' height='10' viewBox='0 0 10 10'><path d='M6.5 1.5 L3 5 L6.5 8.5' fill='none' stroke='#4d4d4d' stroke-width='2'/></svg>
<svg class='a' style='left:1296px;top:534px' width='10' height='10' viewBox='0 0 10 10'><path d='M3.5 1.5 L7 5 L3.5 8.5' fill='none' stroke='#4d4d4d' stroke-width='2'/></svg>
<span class='t lg' style='left:31.0px;top:558.7px;letter-spacing:0.094px;'>earths</span>
<span class='t lg' style='left:125.1px;top:558.7px;letter-spacing:0.284px;'>ft</span>
<svg class='a' style='left:103px;top:563px' width='22' height='22' viewBox='0 0 22 22'><defs><radialGradient id='gl' cx='42%' cy='30%' r='75%'><stop offset='0' stop-color='#3f9fe2'/><stop offset='0.55' stop-color='#1173c4'/><stop offset='1' stop-color='#0a4f9a'/></radialGradient><linearGradient id='gg' x1='0' y1='0' x2='0' y2='1'><stop offset='0' stop-color='#8fd0a8'/><stop offset='1' stop-color='#3da35a'/></linearGradient></defs><circle cx='10.9' cy='11.1' r='10.3' fill='url(#gl)'/><path d='M2.2 6.5 C3.5 3.8 6 2 8.8 1.3 C10.2 1.8 10.6 3.2 9.8 4.6 C9 6 8.6 7 7.4 7.8 C6.6 8.6 6.4 10 5.2 10.2 C4 10 3.6 8.6 2.6 8.4 Z' fill='url(#gg)'/><path d='M4.6 12 C6.2 11.6 8.2 12.6 8.8 14 C9 16 8 18 7.4 20 C5.6 18.8 4.6 16.4 4.2 14 Z' fill='url(#gg)'/><path d='M12 4.6 C13.4 2.8 15.6 2.2 17.2 3.2 C19.4 4.8 21 7.6 21.2 10.6 C20.8 13.6 19 16.4 16.4 18.6 C15 17.4 14.8 15.2 14 13.4 C13 12 11.8 10.6 11.6 9 C11.2 7.4 11.4 5.8 12 4.6 Z' fill='url(#gg)'/><path d='M8 1.6 C11 0.6 14 1.2 16 2.6 C13.5 3 11 3 9.4 4 Z' fill='#9fd4f2' opacity='0.8'/></svg>
<div class='a btn' style='left:1016px;top:557px;width:93px;height:34px;'></div>
<span class='t ' style='left:1058.6px;top:567.0px;letter-spacing:-0.105px;'>Create</span>
<div class='a btn' style='left:1117px;top:557px;width:93px;height:34px;'></div>
<span class='t ' style='left:1161.3px;top:567.0px;letter-spacing:0.009px;'>Finish</span>
<div class='a btn' style='left:1218px;top:557px;width:93px;height:34px;'></div>
<span class='t ' style='left:1260.5px;top:567.0px;letter-spacing:-0.392px;'>Cancel</span>
<svg class='a' style='left:1019px;top:561px' width='26' height='26' viewBox='0 0 26 26'><circle cx='13' cy='13' r='10.5' fill='none' stroke='#4db560' stroke-width='3'/><path d='M13 6 V20 M6 13 H20' stroke='#4db560' stroke-width='3'/></svg>
<svg class='a' style='left:1121px;top:562px' width='24' height='24' viewBox='0 0 24 24' shape-rendering='crispEdges'><path d='M0 0 H4 V7 H20 V0 H24 V24 H0 Z' fill='#2b7fc6'/><rect x='6' y='0' width='3' height='6' fill='#2b7fc6'/><rect x='4' y='18' width='16' height='3' fill='#fff'/></svg>
<svg class='a' style='left:1221px;top:562px' width='26' height='26' viewBox='0 0 26 26'><circle cx='13.3' cy='12.8' r='9.7' fill='none' stroke='#c57b99' stroke-width='3'/><path d='M6.4 18.2 L20.4 7.6' stroke='#c57b99' stroke-width='3'/></svg>
</body></html>
